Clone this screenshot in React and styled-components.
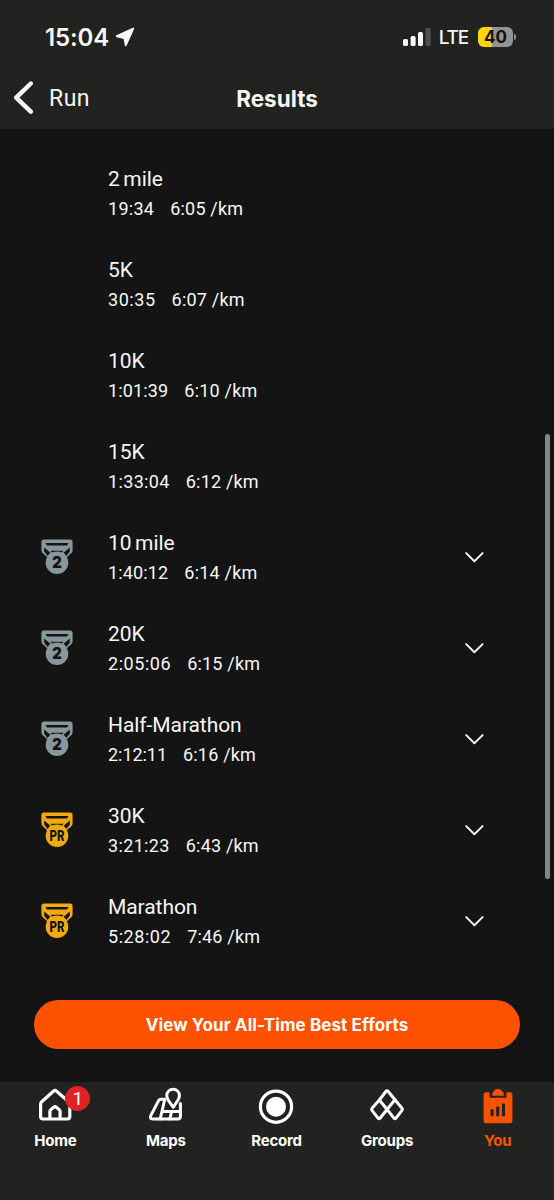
import React from "react";
import styled, { createGlobalStyle } from "styled-components";

const GlobalStyle = createGlobalStyle`
  * { box-sizing: border-box; }
  body { margin: 0; background: #141414; }
`;

const Screen = styled.div`
  position: relative;
  display: flex;
  flex-direction: column;
  width: 554px;
  height: 1200px;
  overflow: hidden;
  background: #141414;
  color: #f7f7f5;
  font-family: Roboto, "Liberation Sans", sans-serif;
`;

const Header = styled.header`
  height: 129px;
  flex: none;
  background: #222220;
`;

const StatusBar = styled.div`
  display: flex;
  align-items: center;
  justify-content: space-between;
  height: 68px;
  padding: 6px 38px 0 45px;
  font-family: Inter, sans-serif;
`;

const StatusGroup = styled.div`
  display: flex;
  align-items: center;
  gap: ${(p) => p.$gap}px;
`;

const Clock = styled.span`
  padding-top: 1px;
  font-size: 24px;
  font-weight: 600;
  letter-spacing: -0.1px;
  line-height: 30px;
`;

const Network = styled.span`
  padding-top: 1px;
  font-size: 19px;
  font-weight: 500;
  letter-spacing: -1.2px;
  line-height: 24px;
`;

const Battery = styled.span`
  display: flex;
  align-items: center;
  gap: 1px;
  margin-left: 2px;
  &::after {
    content: "";
    width: 2px;
    height: 6px;
    border-radius: 0 2px 2px 0;
    background: #8e8e8e;
  }
`;

const BatteryLevel = styled.span`
  width: 35px;
  height: 20px;
  border-radius: 6px;
  background: linear-gradient(90deg, #fdd50a 41%, #929292 41%);
  color: #111;
  font-size: 17px;
  font-weight: 700;
  line-height: 20px;
  text-align: center;
`;

const NavBar = styled.nav`
  display: grid;
  grid-template-columns: 1fr auto 1fr;
  align-items: center;
  height: 61px;
  padding: 0 12px;
`;

const BackLink = styled.a`
  display: flex;
  align-items: center;
  gap: 14px;
  font-size: 23px;
  letter-spacing: 0.5px;
  line-height: 30px;
`;

const BackLabel = styled.span`
  padding-top: 1px;
`;

const PageTitle = styled.h1`
  margin: 0;
  font-family: Inter, sans-serif;
  font-size: 22.5px;
  font-weight: 700;
  line-height: 30px;
`;

const EffortList = styled.ul`
  list-style: none;
  margin: 0;
  padding: 19px 0 0;
`;

const EffortRow = styled.li`
  display: grid;
  grid-template-columns: 68px 1fr 20px;
  align-items: center;
  height: 91px;
  padding: 0 70px 0 40px;
`;

const EffortName = styled.div`
  font-size: 21px;
  line-height: 30px;
  letter-spacing: -0.07px;
  word-spacing: -1.5px;
`;

const EffortStats = styled.div`
  display: flex;
  gap: 16px;
  font-size: 18px;
  line-height: 30px;
`;

const Stat = styled.span`
  letter-spacing: ${(p) => p.$tracking ?? 0.2}px;
`;

const Medal = styled.svg`
  display: block;
  margin-top: -1px;
  color: ${(p) => (p.$gold ? "#f2ab0c" : "#87979b")};
`;

const BestEffortsButton = styled.button`
  flex: none;
  height: 49px;
  margin: 33px 34px 0;
  padding: 1px 0 0;
  border: 0;
  border-radius: 25px;
  background: #ff5200;
  color: #fff;
  font-family: Inter, sans-serif;
  font-size: 17px;
  font-weight: 700;
  letter-spacing: 0.1px;
`;

const TabBar = styled.nav`
  display: grid;
  grid-template-columns: repeat(5, 1fr);
  height: 118.5px;
  margin-top: auto;
  padding-right: 1px;
  flex: none;
  background: #222220;
`;

const Tab = styled.a`
  display: flex;
  flex-direction: column;
  align-items: center;
  padding-top: 5.5px;
  color: ${(p) => (p.$active ? "#fc5200" : "#fff")};
`;

const TabIcon = styled.span`
  position: relative;
  height: 40px;
`;

const TabLabel = styled.span`
  margin-top: 4px;
  font-family: Inter, sans-serif;
  font-size: 15px;
  font-weight: 700;
  line-height: 20px;
  letter-spacing: -0.2px;
`;

const Badge = styled.span`
  position: absolute;
  top: -1px;
  left: 30px;
  width: 25px;
  height: 25px;
  border-radius: 50%;
  background: #e02227;
  color: #fff;
  font-size: 19px;
  line-height: 25px;
  text-align: center;
`;

const ScrollThumb = styled.div`
  position: absolute;
  top: 434px;
  right: 4px;
  width: 5px;
  height: 445px;
  border-radius: 3px;
  background: #858585;
`;

function MedalIcon({ label }) {
  const pr = label === "PR";
  return (
    <Medal $gold={pr} width="34" height="38" viewBox="0 0 34 38">
      <path
        fill="currentColor"
        d="M4 1.6H30Q32.6 1.6 32.6 4.4V12.2Q32.6 14 31.2 15.2L26.5 19.5H7.5L2.8 15.2Q1.4 14 1.4 12.2V4.4Q1.4 1.6 4 1.6Z"
      />
      <g fill="#141414">
        <path d="M5.4 5H28.6L27 7.5H7Z" />
        <path d="M10.6 12.7H23.4L21.3 15.6H12.7Z" />
        <path d="M4.2 9.4L10.4 14.8L7.6 18L4.2 13.6Z" />
        <path d="M29.8 9.4L23.6 14.8L26.4 18L29.8 13.6Z" />
      </g>
      <circle cx="17" cy="24.7" r="11.3" fill="currentColor" />
      <text
        x="17"
        y={pr ? 30.3 : 30}
        textAnchor="middle"
        fill="#141414"
        fontFamily={pr ? "Roboto, sans-serif" : "Inter, sans-serif"}
        fontWeight="900"
        fontSize={pr ? 15.5 : 15.5}
        textLength={pr ? 15 : 9.5}
        lengthAdjust="spacingAndGlyphs"
      >
        {label}
      </text>
    </Medal>
  );
}

const line = {
  fill: "none",
  stroke: "currentColor",
  strokeLinecap: "round",
  strokeLinejoin: "round",
};

const BackIcon = () => (
  <svg width="23" height="36" viewBox="0 0 23 36" {...line} strokeWidth="4.4">
    <path d="M18.8 2.5L4.2 16.6L18.8 30.7" />
  </svg>
);

const LocationIcon = () => (
  <svg width="20" height="20" viewBox="0 0 20 20">
    <path
      d="M18.2 1.6L1.8 9.2L9.4 10.9L10.8 18.2Z"
      fill="currentColor"
      stroke="currentColor"
      strokeWidth="2"
      strokeLinejoin="round"
    />
  </svg>
);

const SignalIcon = () => (
  <svg width="28" height="18" viewBox="0 0 28 18" fill="currentColor">
    <rect x="0" y="11" width="5" height="7" rx="1.6" />
    <rect x="7.6" y="8" width="5" height="10" rx="1.6" />
    <rect x="15" y="4" width="5" height="14" rx="1.6" />
    <rect x="22.6" y="0" width="5" height="18" rx="1.6" opacity="0.22" />
  </svg>
);

const ChevronIcon = () => (
  <svg width="20" height="12" viewBox="0 0 20 12" {...line} strokeWidth="1.9">
    <path d="M2.2 1.1L10.4 9.2L18.6 1.1" />
  </svg>
);

const HomeIcon = () => (
  <svg width="40" height="40" viewBox="0 0 40 40" {...line} strokeWidth="3.2">
    <path d="M5.6 17.2Q5.6 15.8 6.7 14.8L18.7 4Q20 2.9 21.3 4L33.7 14.8Q34.8 15.8 34.8 17.2V29.6Q34.8 32 32.4 32H8Q5.6 32 5.6 29.6Z" />
    <path d="M14.9 31.5V24.3Q14.9 23.3 15.7 22.7L19 20Q20 19.2 21 20L24.3 22.7Q25.1 23.3 25.1 24.3V31.5" />
  </svg>
);

const MapIcon = () => (
  <svg width="40" height="40" viewBox="0 0 40 40" {...line} strokeWidth="3">
    <path d="M18.5 12.3H15Q13.4 12.3 12.6 13.6L4.9 28.4Q3.2 32 6.8 32H31.8Q34.4 32 34.4 29.4V16.4" />
    <path d="M18.6 13L14.2 32M17 24.5H34M25.5 25L23.8 32" />
    <path d="M27.3 20.3L22 12.8Q20.8 10.8 20.8 8.5A6.2 6.2 0 0 1 33.4 8.5Q33.4 10.8 32.2 12.8Z" />
  </svg>
);

const RecordIcon = () => (
  <svg width="40" height="40" viewBox="0 0 40 40">
    <circle cx="20" cy="19.7" r="15.6" fill="none" stroke="currentColor" strokeWidth="3.2" />
    <circle cx="20" cy="19.7" r="10" fill="currentColor" />
  </svg>
);

const GroupsIcon = () => (
  <svg width="40" height="40" viewBox="0 0 40 40" {...line} strokeWidth="3">
    <path d="M18.8 4.5Q20 3 21.2 4.5L35 21.3Q35.8 22.3 35 23.4L29 31.2Q28 32.5 27 31.2L12.4 13Z" />
    <path d="M27.7 13L13 31.2Q12 32.5 11 31.2L5 23.4Q4.2 22.3 5 21.3L12.4 13" />
  </svg>
);

const YouIcon = () => (
  <svg width="40" height="40" viewBox="0 0 40 40">
    <path
      fill="currentColor"
      d="M7.8 5.2H11.6V10.8H28.4V5.2H32.2Q34.4 5.2 34.4 7.4V34Q34.4 36.3 32.2 36.3H7.8Q5.6 36.3 5.6 34V7.4Q5.6 5.2 7.8 5.2Z"
    />
    <path fill="currentColor" d="M14.3 8.7V5.8Q14.3 5 15.5 4.9C16.4 1.1 23.6 1.1 24.5 4.9Q25.7 5 25.7 5.8V8.7Z" />
    <path fill="#222220" d="M12.5 22.3H15.6V29.2H12.5ZM18.2 19.4H21.3V29.2H18.2ZM23.9 16.4H27V29.2H23.9Z" />
  </svg>
);

const EFFORTS = [
  { name: "2 mile", time: "19:34", pace: "6:05 /km" },
  { name: "5K", time: "30:35", pace: "6:07 /km" },
  { name: "10K", time: "1:01:39", pace: "6:10 /km" },
  { name: "15K", time: "1:33:04", pace: "6:12 /km" },
  { name: "10 mile", time: "1:40:12", pace: "6:14 /km", medal: "2" },
  { name: "20K", time: "2:05:06", pace: "6:15 /km", medal: "2" },
  { name: "Half-Marathon", time: "2:12:11", pace: "6:16 /km", medal: "2" },
  { name: "30K", time: "3:21:23", pace: "6:43 /km", medal: "PR" },
  { name: "Marathon", time: "5:28:02", pace: "7:46 /km", medal: "PR" },
];

// Times with many narrow "1" digits are set tighter than the others.
const timeTracking = (time) =>
  0.55 - (1.4 * (time.split("1").length - 1)) / time.length;

const TABS = [
  { label: "Home", Icon: HomeIcon, badge: "1" },
  { label: "Maps", Icon: MapIcon },
  { label: "Record", Icon: RecordIcon },
  { label: "Groups", Icon: GroupsIcon },
  { label: "You", Icon: YouIcon, active: true },
];

export default function App() {
  return (
    <>
      <GlobalStyle />
      <Screen>
        <Header>
          <StatusBar>
            <StatusGroup $gap={6}>
              <Clock>15:04</Clock>
              <LocationIcon />
            </StatusGroup>
            <StatusGroup $gap={8}>
              <SignalIcon />
              <Network>LTE</Network>
              <Battery>
                <BatteryLevel>40</BatteryLevel>
              </Battery>
            </StatusGroup>
          </StatusBar>
          <NavBar>
            <BackLink>
              <BackIcon />
              <BackLabel>Run</BackLabel>
            </BackLink>
            <PageTitle>Results</PageTitle>
          </NavBar>
        </Header>
        <EffortList>
          {EFFORTS.map(({ name, time, pace, medal }) => (
            <EffortRow key={name}>
              <div>{medal && <MedalIcon label={medal} />}</div>
              <div>
                <EffortName>{name}</EffortName>
                <EffortStats>
                  <Stat $tracking={timeTracking(time)}>{time}</Stat>
                  <Stat>{pace}</Stat>
                </EffortStats>
              </div>
              {medal && <ChevronIcon />}
            </EffortRow>
          ))}
        </EffortList>
        <BestEffortsButton>View Your All-Time Best Efforts</BestEffortsButton>
        <TabBar>
          {TABS.map(({ label, Icon, badge, active }) => (
            <Tab key={label} $active={active}>
              <TabIcon>
                <Icon />
                {badge && <Badge>{badge}</Badge>}
              </TabIcon>
              <TabLabel>{label}</TabLabel>
            </Tab>
          ))}
        </TabBar>
        <ScrollThumb />
      </Screen>
    </>
  );
}
